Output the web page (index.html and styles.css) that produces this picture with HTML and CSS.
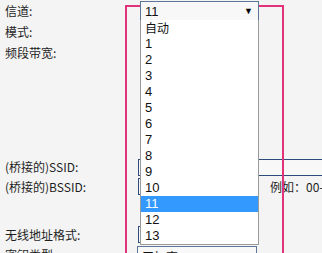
FILE: index.html
```html
<!DOCTYPE html>
<html>
<head>
<meta charset="utf-8">
<link rel="stylesheet" href="styles.css">
</head>
<body>
<div class="page">
  <div class="form">
    <div class="row r-chan">
      <span class="lbl">信道:</span>
      <div class="dd">
        <div class="sel sel-top"><span class="sel-val">11</span><span class="arrow">▼</span></div>
        <ul class="list">
          <li class="cjk">自动</li>
          <li>1</li><li>2</li><li>3</li><li>4</li><li>5</li><li>6</li>
          <li>7</li><li>8</li><li>9</li><li>10</li>
          <li class="on">11</li><li>12</li><li>13</li>
        </ul>
      </div>
    </div>
    <div class="row"><span class="lbl">模式:</span></div>
    <div class="row"><span class="lbl">频段带宽:</span></div>
    <div class="gap1"></div>
    <div class="row r-ssid"><span class="lbl">(桥接的)SSID:</span><div class="inp inp-wide"></div></div>
    <div class="row"><span class="lbl">(桥接的)BSSID:</span><div class="inp"></div><span class="hint">例如：00-1D-0F-11-22-33</span></div>
    <div class="gap2"></div>
    <div class="row r-fmt"><span class="lbl">无线地址格式:</span><div class="inp"></div></div>
    <div class="row r-key"><span class="lbl">密钥类型:</span><div class="sel sel-key"><span class="sel-val">无加密</span><span class="arrow">▼</span></div></div>
  </div>
  <div class="mark"></div>
</div>
</body>
</html>
```
FILE: styles.css
```css
html, body {
  margin: 0;
  background: #f4f4f4;
}
body {
  font: 12px "Noto Sans CJK SC", "Liberation Sans", sans-serif;
  color: #1e1e1e;
}
.page {
  position: relative;
  width: 322px;
  height: 253px;
  overflow: hidden;
}
.form {
  padding-left: 5px;
}
.row {
  display: flex;
  align-items: center;
  height: 21px;
  white-space: nowrap;
}
.lbl {
  width: 133px;
  flex: none;
  line-height: 14px;
}
.r-chan {
  align-items: flex-start;
}
.r-chan .lbl {
  margin-top: 4px;
}
.gap1 { height: 95px; }
.gap2 { height: 28px; }
.r-ssid { height: 18px; }
.r-fmt { height: 19px; }
.r-key { align-items: flex-start; }
.r-key .lbl { margin-top: 4px; }

.inp {
  box-sizing: border-box;
  width: 119px;
  height: 17px;
  border: 1px solid #2e4c7a;
  background: #f8f8f8;
  flex: none;
}
.inp-wide { width: 220px; }
.hint {
  margin-left: 13px;
  line-height: 14px;
}

.dd {
  position: relative;
  z-index: 2;
  margin-left: 2px;
  margin-top: 1px;
}
.sel {
  box-sizing: border-box;
  display: flex;
  align-items: center;
  justify-content: space-between;
  width: 119px;
  height: 20px;
  border: 1px solid #5d7597;
  background: #f8f8f8;
  padding: 0 5px 0 4px;
  font: 13px "Liberation Sans", "Noto Sans CJK SC", sans-serif;
  color: #111;
}
.sel-key {
  margin-top: 2px;
  margin-left: -1px;
  width: 120px;
  font-size: 12px;
}
.sel-key .sel-val {
  font-family: "Noto Sans CJK SC", sans-serif;
}
.arrow {
  font-size: 9px;
  color: #000;
}
.list {
  position: absolute;
  left: 0;
  top: 19px;
  width: 119px;
  box-sizing: border-box;
  margin: 0;
  padding: 0;
  list-style: none;
  background: #fff;
  border: 1px solid #9a9a9a;
  border-top: none;
}
.list li {
  height: 16px;
  line-height: 16px;
  padding-left: 4px;
  font: 13px/16px "Liberation Sans", "Noto Sans CJK SC", sans-serif;
  color: #111;
}
.list li.cjk {
  font: 12px/16px "Noto Sans CJK SC", sans-serif;
}
.list li.on {
  background: #3399ff;
  color: #fff;
}
.mark {
  position: absolute;
  z-index: 1;
  left: 125px;
  top: 5px;
  width: 155px;
  height: 260px;
  border: 2px solid #e2327a;
}
```
